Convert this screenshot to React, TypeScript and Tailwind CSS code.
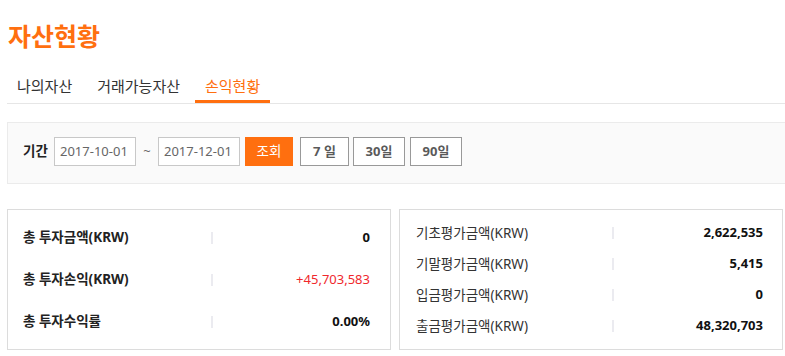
import React from "react";

const FONT = { fontFamily: '"Noto Sans", "Noto Sans CJK KR", sans-serif' };

function Tab({ label, active }: { label: string; active?: boolean }) {
  return (
    <div
      className={
        "px-[10px] pt-[8px] pb-[4px] leading-[20px] text-[15px] border-b-[3px] " +
        (active ? "border-[#ff6f0f] text-[#ff6f0f]" : "border-transparent text-[#333]")
      }
    >
      {label}
    </div>
  );
}

function DateInput({ value }: { value: string }) {
  return (
    <div className="w-[82px] h-[29px] border border-[#c8c8c8] bg-white flex items-center pl-[5px] text-[13px] text-[#666]">
      {value}
    </div>
  );
}

function PeriodBtn({ label, w }: { label: string; w: string }) {
  return (
    <div
      className={
        w +
        " h-[29px] border border-[#999] bg-white flex items-center justify-center text-[13px] font-bold text-[#5a5a5a]"
      }
    >
      {label}
    </div>
  );
}

export default function App() {
  const left = [
    { l: "총 투자금액(KRW)", v: "0", red: false },
    { l: "총 투자손익(KRW)", v: "+45,703,583", red: true },
    { l: "총 투자수익률", v: "0.00%", red: false },
  ];
  const right = [
    { l: "기초평가금액(KRW)", v: "2,622,535" },
    { l: "기말평가금액(KRW)", v: "5,415" },
    { l: "입금평가금액(KRW)", v: "0" },
    { l: "출금평가금액(KRW)", v: "48,320,703" },
  ];
  return (
    <div className="w-[785px] h-[356px] overflow-hidden bg-white" style={FONT}>
      <div className="w-[800px] pl-[7px]">
        <h1 className="pl-[1px] pt-[20px] text-[25px] leading-[32px] font-bold text-[#ff6f0f]">
          자산현황
        </h1>
        <div className="mt-[16px] flex gap-[5px] border-b border-[#e6e6e6]">
          <Tab label="나의자산" />
          <Tab label="거래가능자산" />
          <Tab label="손익현황" active />
        </div>
        <div className="mt-[18px] h-[62px] border border-[#ebebeb] bg-[#fafafa] pl-[15px] pt-[14px] flex items-start">
          <div className="w-[24px] whitespace-nowrap h-[29px] flex items-center text-[13.5px] font-bold text-[#222]">기간</div>
          <div className="ml-[7px]">
            <DateInput value="2017-10-01" />
          </div>
          <div className="w-[22px] h-[29px] flex items-center justify-center text-[13px] text-[#666]">~</div>
          <DateInput value="2017-12-01" />
          <div className="ml-[5px] w-[48px] h-[29px] bg-[#ff6f0f] flex items-center justify-center text-[13.5px] text-white">
            조회
          </div>
          <div className="ml-[7px]">
            <PeriodBtn label="7 일" w="w-[49px]" />
          </div>
          <div className="ml-[4px]">
            <PeriodBtn label="30일" w="w-[52px]" />
          </div>
          <div className="ml-[5px]">
            <PeriodBtn label="90일" w="w-[52px]" />
          </div>
        </div>
        <div className="mt-[25px] flex gap-[8px]">
          <div className="w-[384px] h-[141px] border border-[#dcdcdc] flex flex-col justify-center pl-[15px] pr-[20px]">
            {left.map((r) => (
              <div key={r.l} className="h-[42px] flex items-center">
                <div className="w-[188px] text-[13.5px] font-bold text-[#222]">{r.l}</div>
                <div className="w-[2px] h-[12px] bg-[#ebebf0]" />
                <div
                  className={
                    "flex-1 text-right text-[13px] " +
                    (r.red ? "text-[#f0282d]" : "font-bold text-[#111]")
                  }
                >
                  {r.v}
                </div>
              </div>
            ))}
          </div>
          <div className="w-[384px] h-[141px] border border-[#dcdcdc] flex flex-col justify-center pl-[16px] pr-[19px]">
            {right.map((r) => (
              <div key={r.l} className="h-[31px] flex items-center">
                <div className="w-[196px] text-[13.5px] text-[#333]">{r.l}</div>
                <div className="w-[2px] h-[12px] bg-[#ebebf0]" />
                <div className="flex-1 text-right text-[13px] font-bold text-[#111]">{r.v}</div>
              </div>
            ))}
          </div>
        </div>
      </div>
    </div>
  );
}
